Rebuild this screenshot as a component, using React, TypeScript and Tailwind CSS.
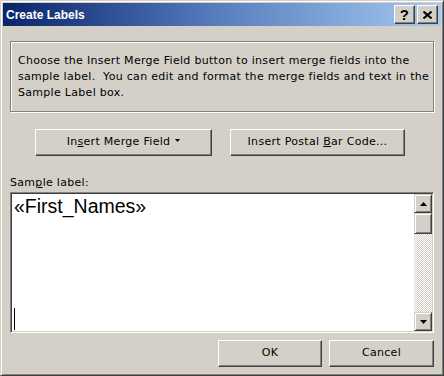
import React from 'react';

const font = { fontFamily: '"DejaVu Sans", Verdana, sans-serif' };

const WinButton = ({ className, children }: { className: string; children: React.ReactNode }) => (
    <div
        className={`flex items-center justify-center border border-t-white border-l-white border-r-[#404040] border-b-[#404040] bg-[#d4d0c8] text-[11px] tracking-[0.3px] text-black shadow-[inset_-1px_-1px_0_#808080] ${className}`}
    >
        {children}
    </div>
);

const ScrollArrow = ({ up }: { up?: boolean }) => (
    <div className="flex h-[19px] w-[18px] items-center justify-center border border-t-[#d4d0c8] border-l-[#d4d0c8] border-r-[#404040] border-b-[#404040] bg-[#d4d0c8] shadow-[inset_1px_1px_0_#fff,inset_-1px_-1px_0_#808080]">
        <svg width="7" height="4" viewBox="0 0 7 4">
            {up ? <path d="M3.5 0 L7 4 L0 4 Z" fill="#000" /> : <path d="M0 0 L7 0 L3.5 4 Z" fill="#000" />}
        </svg>
    </div>
);

const App = () => {
    return (
        <div
            className="h-[376px] w-[444px] border border-t-[#d4d0c8] border-l-[#d4d0c8] border-r-[#404040] border-b-[#404040] bg-[#d4d0c8] shadow-[inset_1px_1px_0_#fff,inset_-1px_-1px_0_#808080]"
            style={font}
        >
            <div className="flex flex-col p-[2px]">
                {/* title bar */}
                <div className="flex h-[23px] items-center justify-between bg-gradient-to-r from-[#0a246a] via-[#5a7fbf] to-[#a6caf0] pl-[3px] pr-[3px]">
                    <span className="font-['Liberation_Sans',Arial,sans-serif] text-[12px] font-bold text-white">Create Labels</span>
                    <div className="flex gap-[2px]">
                        <WinButton className="h-[19px] w-[21px] font-['Liberation_Sans',Arial,sans-serif] text-[15px] font-bold leading-none">?</WinButton>
                        <WinButton className="h-[19px] w-[21px]">
                            <svg width="9" height="8" viewBox="0 0 9 8">
                                <path d="M0.5 0.5 L8.5 7.5 M8.5 0.5 L0.5 7.5" stroke="#000" strokeWidth="2" />
                            </svg>
                        </WinButton>
                    </div>
                </div>

                <div className="flex flex-col px-[7px]">
                    {/* instructions */}
                    <div className="mt-[15px] h-[71px] overflow-hidden whitespace-nowrap border border-[#808080] px-[7px] pt-[11px] text-[11px] leading-[16px] tracking-[0.3px] text-black shadow-[inset_1px_1px_0_#fff,1px_1px_0_#fff]">
                        Choose the Insert Merge Field button to insert merge fields into the
                        <br />
                        sample label.&nbsp; You can edit and format the merge fields and text in the
                        <br />
                        Sample Label box.
                    </div>

                    {/* buttons */}
                    <div className="mt-[17px] flex gap-[18px] pl-[25px]">
                        <WinButton className="h-[27px] w-[177px] gap-[5px]">
                            <span>
                                In<u>s</u>ert Merge Field
                            </span>
                            <svg width="5" height="3" viewBox="0 0 5 3" className="mb-[5px]">
                                <path d="M0 0 L5 0 L2.5 3 Z" fill="#000" />
                            </svg>
                        </WinButton>
                        <WinButton className="h-[27px] w-[175px]">
                            <span>
                                Insert Postal <u>B</u>ar Code...
                            </span>
                        </WinButton>
                    </div>

                    {/* sample label */}
                    <div className="mt-[20px] text-[11px] leading-[13px] tracking-[0.3px] text-black">
                        Sam<u>p</u>le label:
                    </div>
                    <div className="mt-[3px] flex h-[141px] w-[424px] border border-t-[#808080] border-l-[#808080] border-r-white border-b-white bg-white shadow-[inset_1px_1px_0_#404040,inset_-1px_-1px_0_#d4d0c8]">
                        <div className="flex flex-1 flex-col justify-between pl-[3px] pt-[2px] pb-[2px]">
                            <div className="font-['Liberation_Sans',Arial,sans-serif] text-[19.5px] leading-[22px] text-black">«First_Names»</div>
                            <div className="h-[22px] w-px bg-black" />
                        </div>
                        <div className="my-[1px] mr-[1px] flex w-[18px] flex-col bg-[repeating-conic-gradient(#d4d0c8_0_25%,#fff_0_50%)] bg-[length:2px_2px]">
                            <ScrollArrow up />
                            <div className="h-[21px] w-[18px] border border-t-[#d4d0c8] border-l-[#d4d0c8] border-r-[#404040] border-b-[#404040] bg-[#d4d0c8] shadow-[inset_1px_1px_0_#fff,inset_-1px_-1px_0_#808080]" />
                            <div className="flex-1" />
                            <ScrollArrow />
                        </div>
                    </div>

                    {/* footer */}
                    <div className="mt-[7px] flex justify-end gap-[7px]">
                        <WinButton className="h-[27px] w-[104px]">OK</WinButton>
                        <WinButton className="h-[27px] w-[105px]">Cancel</WinButton>
                    </div>
                </div>
            </div>
        </div>
    );
};

export default App;
